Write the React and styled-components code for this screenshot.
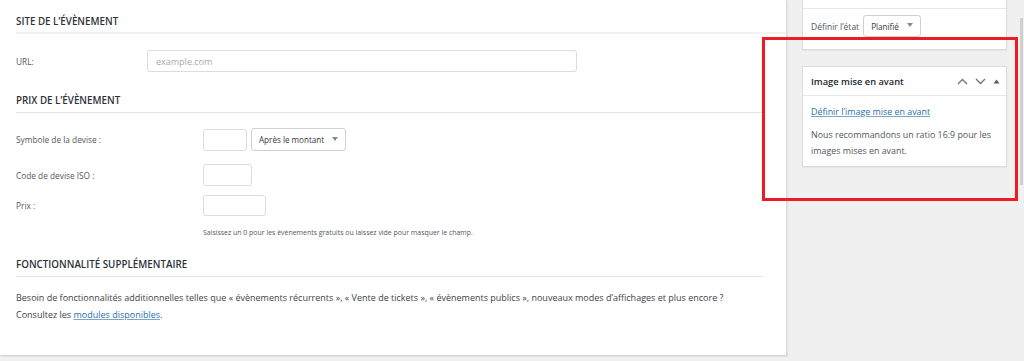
import React from 'react';
import styled, { createGlobalStyle } from 'styled-components';

const GlobalStyle = createGlobalStyle`
  html, body {
    margin: 0;
    padding: 0;
    background: #f0f0f0;
  }
  body {
    font-family: "Open Sans", "Noto Sans", "Liberation Sans", sans-serif;
    color: #3c434a;
    overflow: hidden;
  }
`;

const Page = styled.div`
  position: relative;
  display: flex;
  width: 1024px;
  height: 361px;
  overflow: hidden;
  background: #f0f0f0;
`;

const Main = styled.div`
  box-sizing: border-box;
  width: 787px;
  height: 356px;
  background: #fff;
  border-right: 1px solid #dcdcdc;
  border-bottom: 1px solid #d4d4d4;
  box-shadow: 1px 1px 1px rgba(0, 0, 0, 0.05);
  padding-left: 16px;
  display: flex;
  flex-direction: column;
`;

const SectionTitle = styled.h3`
  margin: ${p => p.$top}px ${p => (p.$full ? 0 : 23)}px 0 0;
  padding: ${p => (p.$full ? 14 : 0)}px 0 ${p => (p.$full ? 2 : 3)}px;
  font-size: 9.8px;
  line-height: 16px;
  font-weight: 600;
  color: #2c3338;
  text-transform: uppercase;
  border-bottom: ${p => (p.$full ? '2px solid #f2f2f2' : '1px solid #e4e4e4')};
`;

const Row = styled.div`
  display: flex;
  align-items: center;
  gap: 4px;
  margin-top: ${p => p.$top}px;
`;

const Label = styled.label`
  width: ${p => p.$width}px;
  margin-right: -4px;
  font-size: 8.3px;
  color: #50575e;
`;

const TextInput = styled.input`
  box-sizing: border-box;
  width: ${p => p.$width}px;
  height: ${p => p.$height || 22}px;
  margin: 0;
  padding: 0 8px;
  border: 1px solid #dcdcdc;
  border-radius: 3px;
  background: #fff;
  font-family: inherit;
  font-size: 9px;
  color: #32373c;
  outline: none;

  &::placeholder {
    color: #a7aaad;
  }
`;

const SelectBox = styled.div`
  box-sizing: border-box;
  display: flex;
  align-items: center;
  justify-content: space-between;
  flex-shrink: 0;
  width: ${p => p.$width}px;
  height: ${p => p.$height || 23}px;
  padding: 0 7px 0 7px;
  border: 1px solid #d0d0d0;
  border-radius: 3px;
  background: #fff;
  font-size: 8.1px;
  white-space: nowrap;
  color: #32373c;
`;

const Caret = styled.span`
  width: 0;
  height: 0;
  border-left: 3px solid transparent;
  border-right: 3px solid transparent;
  border-top: 4px solid #888;
  margin-top: -2px;
`;

const Hint = styled.p`
  margin: 12px 0 0 187px;
  font-size: 6.95px;
  line-height: 10px;
  color: #50575e;
`;

const Paragraph = styled.p`
  margin: 12px 0 0;
  font-size: 9px;
  line-height: 17px;
  color: #3c434a;
`;

const Link = styled.a`
  color: #2a6fab;
  text-decoration: underline;
  text-decoration-color: #7aa7c7;
`;

const Sidebar = styled.div`
  flex: 1;
  display: flex;
  flex-direction: column;
  padding-left: 15px;
`;

const Box = styled.div`
  box-sizing: border-box;
  width: 205px;
  margin-top: ${p => p.$top || 0}px;
  background: #fff;
  border: 1px solid #dcdcdc;
  border-top-width: ${p => (p.$cut ? 0 : 1)}px;
  box-shadow: 0 1px 1px rgba(0, 0, 0, 0.04);
`;

const BoxStrip = styled.div`
  height: 8px;
  border-bottom: 1px solid #e6e6e6;
`;

const StateRow = styled.div`
  display: flex;
  align-items: center;
  gap: 4px;
  padding: 6px 8px 12px;
  font-size: 8.5px;
  color: #50575e;
`;

const BoxHeader = styled.div`
  display: flex;
  align-items: center;
  justify-content: space-between;
  height: 28px;
  padding: 0 6px 0 8px;
  border-bottom: 1px solid #e6e6e6;
`;

const BoxTitle = styled.h2`
  margin: 0;
  font-size: 9.3px;
  font-weight: 600;
  color: #23282d;
`;

const HeaderIcons = styled.div`
  display: flex;
  align-items: center;
  gap: 7px;
`;

const BoxBody = styled.div`
  padding: 8px 8px 7px;
  font-size: 8.9px;
  line-height: 16px;
  color: #50575e;
`;

const BoxText = styled.p`
  margin: 7px 0 0;
`;

const Scrollbar = styled.div`
  width: 5px;
  display: flex;
  flex-direction: column;
  padding-top: 18px;
`;

const Thumb = styled.div`
  width: 3px;
  height: 167px;
  margin-left: 1px;
  background: #cfcfcf;
`;

const Highlight = styled.div`
  position: absolute;
  left: 762px;
  top: 37px;
  width: 256px;
  height: 164px;
  box-sizing: border-box;
  border: 3px solid #ed1c24;
  pointer-events: none;
`;

const Chevron = ({ up }) => (
  <svg width="11" height="7" viewBox="0 0 11 7" fill="none">
    <path
      d={up ? 'M1 6 L5.5 1.5 L10 6' : 'M1 1 L5.5 5.5 L10 1'}
      stroke="#6c7781"
      strokeWidth="1.4"
    />
  </svg>
);

const Toggle = () => (
  <svg width="7" height="5" viewBox="0 0 7 5">
    <path d="M0.5 4.5 L3.5 0.5 L6.5 4.5 Z" fill="#555d66" />
  </svg>
);

export default function App() {
  return (
    <>
      <GlobalStyle />
      <Page>
        <Main>
          <SectionTitle $full $top={0}>Site de l’évènement</SectionTitle>
          <Row $top={16}>
            <Label $width={131}>URL:</Label>
            <TextInput $width={430} placeholder="example.com" />
          </Row>

          <SectionTitle $top={21}>Prix de l’évènement</SectionTitle>
          <Row $top={15}>
            <Label $width={187}>Symbole de la devise :</Label>
            <TextInput $width={44} />
            <SelectBox $width={95}>
              Après le montant
              <Caret />
            </SelectBox>
          </Row>
          <Row $top={13}>
            <Label $width={187}>Code de devise ISO :</Label>
            <TextInput $width={49} />
          </Row>
          <Row $top={9}>
            <Label $width={187}>Prix :</Label>
            <TextInput $width={63} $height={21} />
          </Row>
          <Hint>Saisissez un 0 pour les évènements gratuits ou laissez vide pour masquer le champ.</Hint>

          <SectionTitle $top={19}>Fonctionnalité supplémentaire</SectionTitle>
          <Paragraph>
            Besoin de fonctionnalités additionnelles telles que « évènements récurrents », « Vente de tickets », « évènements publics », nouveaux modes d’affichages et plus encore ?
            <br />
            Consultez les <Link href="#">modules disponibles</Link>.
          </Paragraph>
        </Main>

        <Sidebar>
          <Box $cut>
            <BoxStrip />
            <StateRow>
              Définir l’état
              <SelectBox $width={58} $height={22}>
                Planifié
                <Caret />
              </SelectBox>
            </StateRow>
          </Box>

          <Box $top={16}>
            <BoxHeader>
              <BoxTitle>Image mise en avant</BoxTitle>
              <HeaderIcons>
                <Chevron up />
                <Chevron />
                <Toggle />
              </HeaderIcons>
            </BoxHeader>
            <BoxBody>
              <Link href="#">Définir l’image mise en avant</Link>
              <BoxText>Nous recommandons un ratio 16:9 pour les images mises en avant.</BoxText>
            </BoxBody>
          </Box>
        </Sidebar>

        <Scrollbar>
          <Thumb />
        </Scrollbar>

        <Highlight />
      </Page>
    </>
  );
}
